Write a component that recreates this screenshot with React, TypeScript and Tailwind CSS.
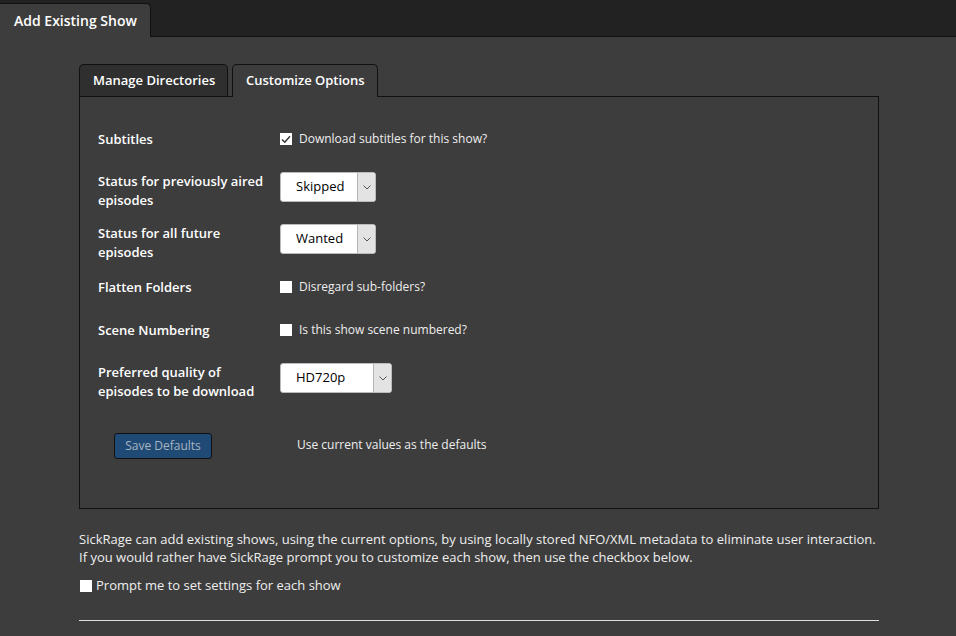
import React from 'react';

function Select({ value, width }: { value: string; width: string }) {
  return (
    <div className={`flex h-[30px] ${width} bg-white border border-[#bbb] rounded-[3px] overflow-hidden`}>
      <span className="flex-1 pl-[15px] flex items-center text-[13px] text-black">{value}</span>
      <span className="w-[18px] bg-[#e3e3e3] border-l border-[#b5b5b5] flex items-center justify-center">
        <svg width="8" height="5" viewBox="0 0 8 5" fill="none" stroke="#555" strokeWidth="1">
          <path d="M0.5 0.5 L4 4 L7.5 0.5" />
        </svg>
      </span>
    </div>
  );
}

function Checkbox({ checked }: { checked?: boolean }) {
  return (
    <span className="w-[12px] h-[12px] bg-white flex items-center justify-center shrink-0">
      {checked && (
        <svg width="10" height="9" viewBox="0 0 10 9" fill="none" stroke="#333" strokeWidth="1.4">
          <path d="M1 4.5 L3.8 7.3 L9 1.2" />
        </svg>
      )}
    </span>
  );
}

function Row({ h, label, children, low }: { h: string; label: React.ReactNode; children: React.ReactNode; low?: boolean }) {
  return (
    <div className={`flex items-center ${h}`}>
      <div className={`w-[182px] text-[13px] font-semibold leading-[19px] text-white ${low ? 'pt-[7px]' : ''}`}>{label}</div>
      <div className="flex items-center">{children}</div>
    </div>
  );
}

export default function App() {
  return (
    <div className="min-h-[636px] bg-[#3d3d3d] text-[#eee]" style={{ fontFamily: '"Open Sans", "Liberation Sans", sans-serif' }}>
      {/* Top tab strip */}
      <div className="h-[37px] bg-[#222] border-b border-[#111] flex items-end">
        <div className="h-[34px] w-[151px] bg-[#3d3d3d] border-t border-r border-[#111] rounded-tr-[5px] -mb-px flex items-center pl-[14px] text-[14px] font-semibold text-white">
          Add Existing Show
        </div>
      </div>

      <div className="ml-[79px] w-[800px] pt-[27px]">
        {/* Inner tabs */}
        <div className="flex gap-[4px] h-[32px] items-end">
          <div className="h-[32px] w-[149px] bg-[#2f2f2f] border border-[#111] border-b-0 rounded-t-[5px] flex items-center pl-[13px] text-[13px] font-semibold text-white">
            Manage Directories
          </div>
          <div className="h-[33px] w-[146px] bg-[#3d3d3d] border border-[#111] border-b-0 rounded-t-[5px] -mb-px relative z-10 flex items-center pl-[13px] pb-px text-[13px] font-semibold text-white">
            Customize Options
          </div>
        </div>

        {/* Panel */}
        <div className="border border-[#111] h-[413px] pt-[23px] pl-[18px]">
          <Row h="h-[38px]" label="Subtitles">
            <label className="flex items-center gap-[7px] text-[12px] text-[#eee]">
              <Checkbox checked />
              Download subtitles for this show?
            </label>
          </Row>
          <Row h="h-[58px]" low label={<>Status for previously aired<br />episodes</>}>
            <Select value="Skipped" width="w-[96px]" />
          </Row>
          <Row h="h-[46px]" low label={<>Status for all future<br />episodes</>}>
            <Select value="Wanted" width="w-[96px]" />
          </Row>
          <Row h="h-[50px]" label="Flatten Folders">
            <label className="flex items-center gap-[7px] text-[12px] text-[#eee]">
              <Checkbox />
              Disregard sub-folders?
            </label>
          </Row>
          <Row h="h-[36px]" label="Scene Numbering">
            <label className="flex items-center gap-[7px] text-[12px] text-[#eee]">
              <Checkbox />
              Is this show scene numbered?
            </label>
          </Row>
          <Row h="h-[60px]" low label={<>Preferred quality of<br />episodes to be download</>}>
            <Select value="HD720p" width="w-[112px]" />
          </Row>
          <div className="flex items-center h-[74px]">
            <div className="w-[182px] pl-[16px]">
              <button className="h-[26px] w-[98px] bg-[#1f4a75] border border-[#111] rounded-[3px] text-[12px] text-[#a8b4c0]">
                Save Defaults
              </button>
            </div>
            <span className="pl-[17px] text-[12px] text-[#eee]">Use current values as the defaults</span>
          </div>
        </div>

        {/* Footer text */}
        <p className="mt-[21px] text-[13px] leading-[18px] text-[#eee]">
          SickRage can add existing shows, using the current options, by using locally stored NFO/XML metadata to eliminate user interaction.
          <br />
          If you would rather have SickRage prompt you to customize each show, then use the checkbox below.
        </p>
        <label className="mt-[10px] flex items-center gap-[4px] text-[13px] text-[#eee]">
          <span className="w-[12px] h-[12px] bg-white ml-px" />
          Prompt me to set settings for each show
        </label>
        <hr className="mt-[24px] border-0 border-t border-[#ddd]" />
      </div>
    </div>
  );
}
